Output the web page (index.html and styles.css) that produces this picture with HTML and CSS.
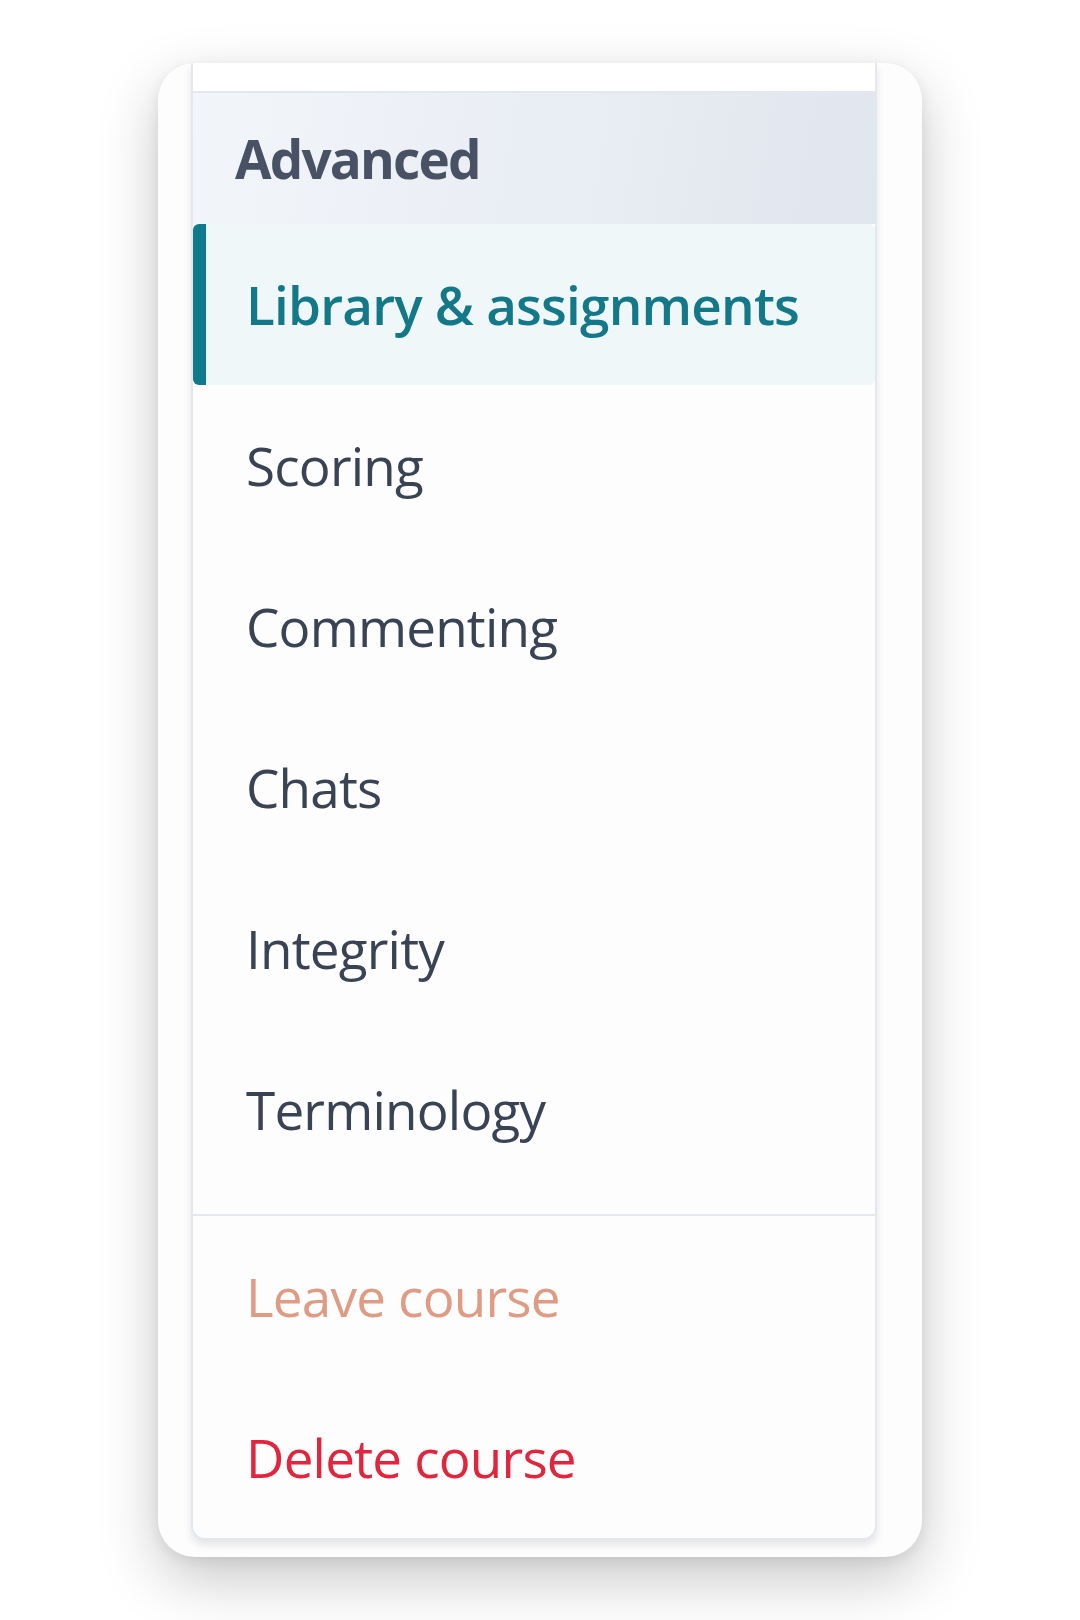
FILE: index.html
```html
<!DOCTYPE HTML>
<html>
<head>
<link rel="stylesheet" href="styles.css">
</head>
<body>
<div class="card">
    <nav class="panel">
        <div class="panel-top"></div>
        <div class="section-head">Advanced</div>
        <ul class="menu">
            <li class="menu-item active">Library &amp; assignments</li>
            <li class="menu-item">Scoring</li>
            <li class="menu-item">Commenting</li>
            <li class="menu-item">Chats</li>
            <li class="menu-item">Integrity</li>
            <li class="menu-item">Terminology</li>
        </ul>
        <ul class="menu danger-zone">
            <li class="menu-item leave">Leave course</li>
            <li class="menu-item delete">Delete course</li>
        </ul>
    </nav>
</div>
</body>
</html>
```
FILE: styles.css
```css
body {
    margin: 0;
    padding: 63px 0 0;
    background: #ffffff;
    font-family: "Open Sans", "Noto Sans", Arial, sans-serif;
    display: flex;
    justify-content: center;
    min-height: 100vh;
    box-sizing: border-box;
}

.card {
    width: 764px;
    height: 1494px;
    box-sizing: border-box;
    padding: 0 45px 17px 33px;
    background: #fdfdfd;
    border-radius: 37px;
    box-shadow: 0 22px 60px rgba(0, 0, 0, 0.22), 0 4px 14px rgba(0, 0, 0, 0.07);
    overflow: hidden;
}

.panel {
    background: #fdfdfe;
    border: 2px solid #e3e8f0;
    border-top: none;
    border-radius: 0 0 14px 14px;
    box-shadow: 0 5px 9px rgba(0, 0, 0, 0.1);
}

.panel-top {
    height: 28px;
    background: #ffffff;
    border-bottom: 2px solid #e3e8f0;
}

.section-head {
    height: 131px;
    display: flex;
    align-items: center;
    padding-left: 42px;
    background: linear-gradient(100deg, #f2f5f9 0%, #e9edf4 55%, #e0e6ee 100%);
    color: #485264;
    font-size: 53px;
    font-weight: 700;
    letter-spacing: -1.8px;
}

.menu {
    list-style: none;
    margin: 0;
    padding: 0 0 24px;
}

.menu-item {
    height: 161px;
    display: flex;
    align-items: center;
    padding-left: 53px;
    color: #3a4354;
    font-size: 53px;
    letter-spacing: -0.8px;
}

.menu-item.active {
    padding-left: 40px;
    border-left: 13px solid #0e7a8b;
    border-radius: 6px;
    background: #eff7f9;
    color: #137888;
    font-weight: 600;
}

.danger-zone {
    border-top: 2px solid #e3e8f0;
    padding-bottom: 0;
}

.menu-item.leave {
    color: #df9c85;
}

.menu-item.delete {
    color: #e1253d;
}
```
